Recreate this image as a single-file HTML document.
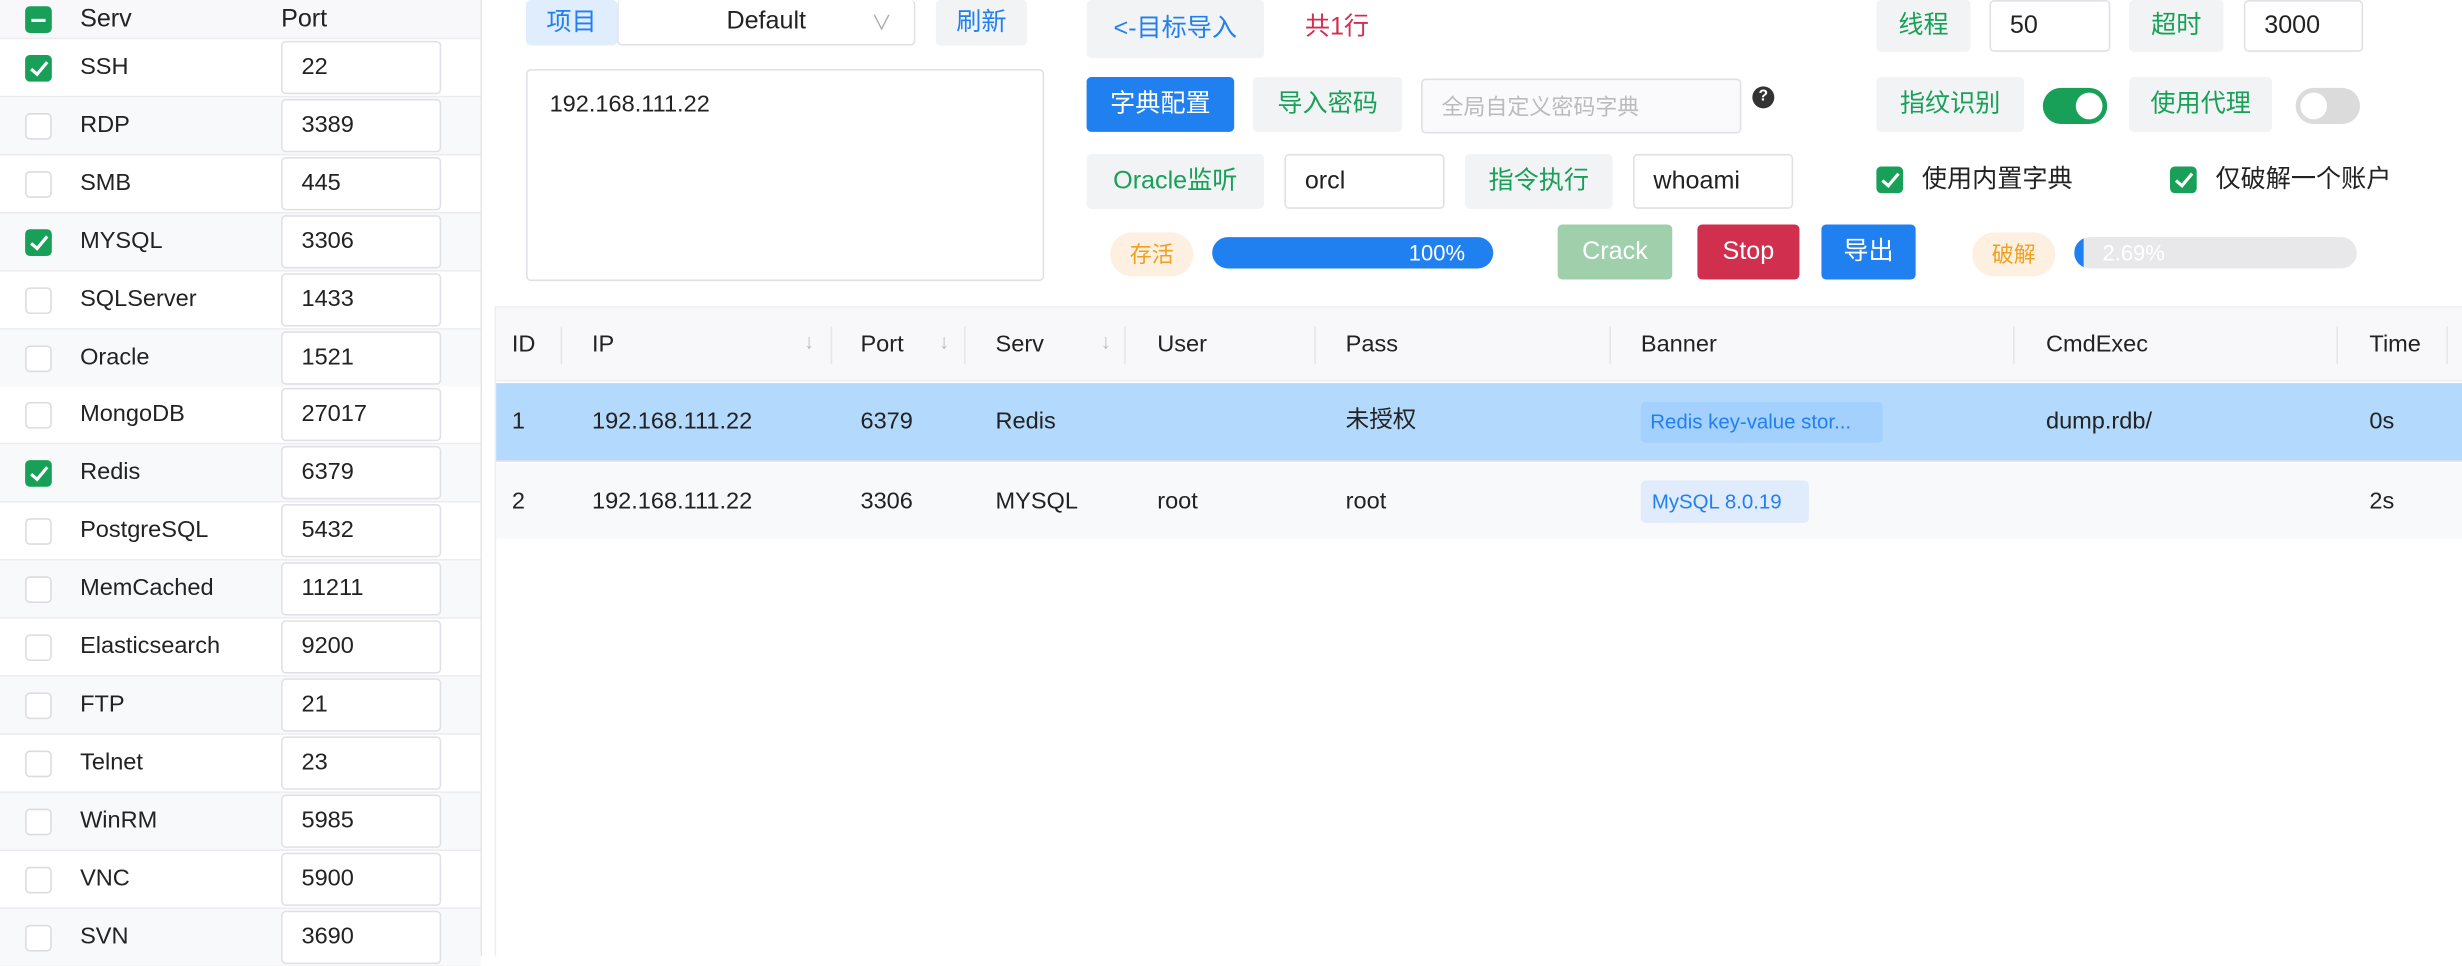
<!DOCTYPE html>
<html><head><meta charset="utf-8"><style>
*{box-sizing:border-box;margin:0;padding:0}
body{width:2462px;height:956px;overflow:hidden;background:#fff;font-family:"Liberation Sans","Noto Sans CJK SC",sans-serif;color:#222}
#w{width:1568px;height:609px;transform:scale(1.5702);transform-origin:0 0;position:relative;font-size:15px;line-height:1.2}
.a{position:absolute}
.left{left:0;top:0;width:307px;height:609px;border-right:1px solid #e6e6ea}
.row{position:absolute;left:0;width:306px;height:37px;border-bottom:1px solid #ececf0}
.cb{position:absolute;left:16px;width:17px;height:17px;border:1px solid #dcdce0;border-radius:3px;background:#fff}
.cb.on,.cb.ind{background:#18a058;border-color:#18a058}
.cb.on:after{content:"";position:absolute;left:5px;top:1px;width:4px;height:9px;border:solid #fff;border-width:0 2px 2px 0;transform:rotate(40deg)}
.cb.ind:after{content:"";position:absolute;left:3px;top:7px;width:9px;height:2px;background:#fff}
.pi{position:absolute;left:179px;width:102px;height:34px;border:1px solid #e0e0e6;border-radius:3px;background:#fff;padding-left:12px;line-height:32px}
.btn{position:absolute;display:flex;align-items:center;justify-content:center;border-radius:3px;font-size:16px;line-height:1}
.g{background:#f2f3f5;color:#18a058}
.bl{color:#2080f0}
.inp{position:absolute;border:1px solid #e0e0e6;border-radius:3px;background:#fff;padding-left:12px;display:flex;align-items:center;font-size:16px;line-height:1}
.th{position:absolute;top:196px;height:47px;line-height:47px;font-size:15px}
.sep{position:absolute;top:208px;width:1px;height:24px;background:#e6e6ea}
.td{position:absolute;font-size:15px;line-height:18px}
.arr{position:absolute;top:210px;color:#bbb;font-size:13px}
</style></head><body><div id="w">
<div class="a left">
<div class="row" style="top:0;height:25px;background:#f8f8fa"><div class="cb ind" style="top:4px"></div><div class="a" style="left:51px;top:3px;font-size:16px">Serv</div><div class="a" style="left:179px;top:3px;font-size:16px">Port</div></div>
</div>
<div id="rows"></div>
<script>
var d=[["SSH",22,1],["RDP",3389,0],["SMB",445,0],["MYSQL",3306,1],["SQLServer",1433,0],["Oracle",1521,0],["MongoDB",27017,0],["Redis",6379,1],["PostgreSQL",5432,0],["MemCached",11211,0],["Elasticsearch",9200,0],["FTP",21,0],["Telnet",23,0],["WinRM",5985,0],["VNC",5900,0],["SVN",3690,0]];
var h="";d.forEach(function(r,i){var t=25+i*36.9;h+='<div class="row" style="top:'+t+'px;background:'+(i%2?'#f8f9fb':'#fff')+'"><div class="cb'+(r[2]?' on':'')+'" style="top:10px"></div><div class="a" style="left:51px;top:9px">'+r[0]+'</div><div class="pi" style="top:1px">'+r[1]+'</div></div>';});
document.getElementById("rows").innerHTML=h;
</script>
<div class="btn bl" style="left:335px;top:0;width:58px;height:29px;background:#e0edfd">项目</div>
<div class="inp" style="left:393px;top:0;width:190px;height:29px;justify-content:center;padding:0;border-top:none">Default<span class="a" style="right:14px;top:8px;color:#aaa;font-size:13px">&#8744;</span></div>
<div class="btn bl g" style="left:596px;top:0;width:58px;height:29px;color:#2080f0">刷新</div>
<div class="inp" style="left:335px;top:44px;width:330px;height:135px;align-items:flex-start;padding-top:14px;padding-left:14px;font-size:15px">192.168.111.22</div>
<div class="btn g" style="left:692px;top:0;width:113px;height:37px;color:#2080f0">&lt;-目标导入</div>
<div class="a" style="left:831px;top:10px;color:#d03050;font-size:16px;line-height:1">共1行</div>
<div class="btn g" style="left:1195px;top:0;width:60px;height:33px">线程</div>
<div class="inp" style="left:1267px;top:0;width:77px;height:33px">50</div>
<div class="btn g" style="left:1356px;top:0;width:60px;height:33px">超时</div>
<div class="inp" style="left:1429px;top:0;width:76px;height:33px">3000</div>
<div class="btn" style="left:692px;top:49px;width:94px;height:35px;background:#2080f0;color:#fff">字典配置</div>
<div class="btn g" style="left:798px;top:49px;width:95px;height:35px">导入密码</div>
<div class="inp" style="left:905px;top:50px;width:204px;height:35px;background:#fafafc;color:#bbb;font-size:14px">全局自定义密码字典</div>
<div class="a" style="left:1116px;top:55px;width:14px;height:14px;border-radius:7px;background:#333;color:#fff;font-size:10px;text-align:center;line-height:14px;font-weight:bold">?</div>
<div class="btn g" style="left:1195px;top:49px;width:94px;height:35px">指纹识别</div>
<div class="a" style="left:1301px;top:56px;width:41px;height:23px;border-radius:12px;background:#18a058"><div class="a" style="right:3px;top:3px;width:17px;height:17px;border-radius:9px;background:#fff"></div></div>
<div class="btn g" style="left:1356px;top:49px;width:91px;height:35px">使用代理</div>
<div class="a" style="left:1462px;top:56px;width:41px;height:23px;border-radius:12px;background:#dbdbdb"><div class="a" style="left:3px;top:3px;width:17px;height:17px;border-radius:9px;background:#fff"></div></div>
<div class="btn g" style="left:692px;top:98px;width:113px;height:35px">Oracle监听</div>
<div class="inp" style="left:818px;top:98px;width:102px;height:35px">orcl</div>
<div class="btn g" style="left:933px;top:98px;width:94px;height:35px">指令执行</div>
<div class="inp" style="left:1040px;top:98px;width:102px;height:35px">whoami</div>
<div class="cb on" style="left:1195px;top:106px"></div><div class="a" style="left:1224px;top:107px;font-size:16px;line-height:1">使用内置字典</div>
<div class="cb on" style="left:1382px;top:106px"></div><div class="a" style="left:1411px;top:107px;font-size:16px;line-height:1">仅破解一个账户</div>
<div class="btn" style="left:707px;top:148px;width:53px;height:28px;border-radius:14px;background:#fdf0e0;color:#f0a020;font-size:14px">存活</div>
<div class="a" style="left:772px;top:151px;width:179px;height:20px;border-radius:10px;background:#2080f0;color:#fff;text-align:right;padding-right:18px;line-height:20px;font-size:14px">100%</div>
<div class="btn" style="left:992px;top:143px;width:73px;height:35px;background:#9fd0ab;color:#fff">Crack</div>
<div class="btn" style="left:1081px;top:143px;width:65px;height:35px;background:#d0304e;color:#fff">Stop</div>
<div class="btn" style="left:1160px;top:143px;width:60px;height:35px;background:#2080f0;color:#fff">导出</div>
<div class="btn" style="left:1256px;top:148px;width:53px;height:28px;border-radius:14px;background:#fdf0e0;color:#f0a020;font-size:14px">破解</div>
<div class="a" style="left:1321px;top:151px;width:180px;height:20px;border-radius:10px;background:#e8e8ea;overflow:hidden"><div class="a" style="left:0;top:0;width:6px;height:20px;background:#2080f0;border-radius:10px 0 0 10px"></div><span class="a" style="left:18px;top:2px;color:#fff;font-size:14px">2.69%</span></div>
<div class="a" style="left:315px;top:195px;width:1253px;height:414px;border-left:1px solid #eee;border-top:1px solid #eee"></div>
<div class="a" style="left:316px;top:196px;width:1252px;height:47px;background:#f8f8fa;border-bottom:1px solid #eee"></div>
<div class="th" style="left:326px">ID</div><div class="th" style="left:377px">IP</div><div class="th" style="left:548px">Port</div><div class="th" style="left:634px">Serv</div><div class="th" style="left:737px">User</div><div class="th" style="left:857px">Pass</div><div class="th" style="left:1045px">Banner</div><div class="th" style="left:1303px">CmdExec</div><div class="th" style="left:1509px">Time</div>
<div class="arr" style="left:512px">↓</div><div class="arr" style="left:598px">↓</div><div class="arr" style="left:701px">↓</div>
<div class="sep" style="left:357px"></div><div class="sep" style="left:529px"></div><div class="sep" style="left:614px"></div><div class="sep" style="left:716px"></div><div class="sep" style="left:837px"></div><div class="sep" style="left:1025px"></div><div class="sep" style="left:1282px"></div><div class="sep" style="left:1488px"></div><div class="sep" style="left:1558px"></div>
<div class="a" style="left:316px;top:244px;width:1252px;height:50px;background:#b3dafd;border-bottom:1px solid #dde"></div>
<div class="a" style="left:316px;top:295px;width:1252px;height:48px;background:#f8f9fb"></div>
<div class="td" style="left:326px;top:260px">1</div><div class="td" style="left:377px;top:260px">192.168.111.22</div><div class="td" style="left:548px;top:260px">6379</div><div class="td" style="left:634px;top:260px">Redis</div><div class="td" style="left:857px;top:260px;line-height:15px">未授权</div>
<div class="a" style="left:1045px;top:256px;width:154px;height:26px;background:#a3d0fd;border-radius:3px;color:#2080f0;font-size:13px;line-height:26px;padding-left:6px">Redis key-value stor...</div>
<div class="td" style="left:1303px;top:260px">dump.rdb/</div><div class="td" style="left:1509px;top:260px">0s</div>
<div class="td" style="left:326px;top:311px">2</div><div class="td" style="left:377px;top:311px">192.168.111.22</div><div class="td" style="left:548px;top:311px">3306</div><div class="td" style="left:634px;top:311px">MYSQL</div><div class="td" style="left:737px;top:311px">root</div><div class="td" style="left:857px;top:311px">root</div>
<div class="a" style="left:1045px;top:306px;width:107px;height:27px;background:#e0ebfc;border-radius:3px;color:#2080f0;font-size:13px;line-height:27px;padding-left:7px">MySQL 8.0.19</div>
<div class="td" style="left:1509px;top:311px">2s</div>
</div></body></html>
